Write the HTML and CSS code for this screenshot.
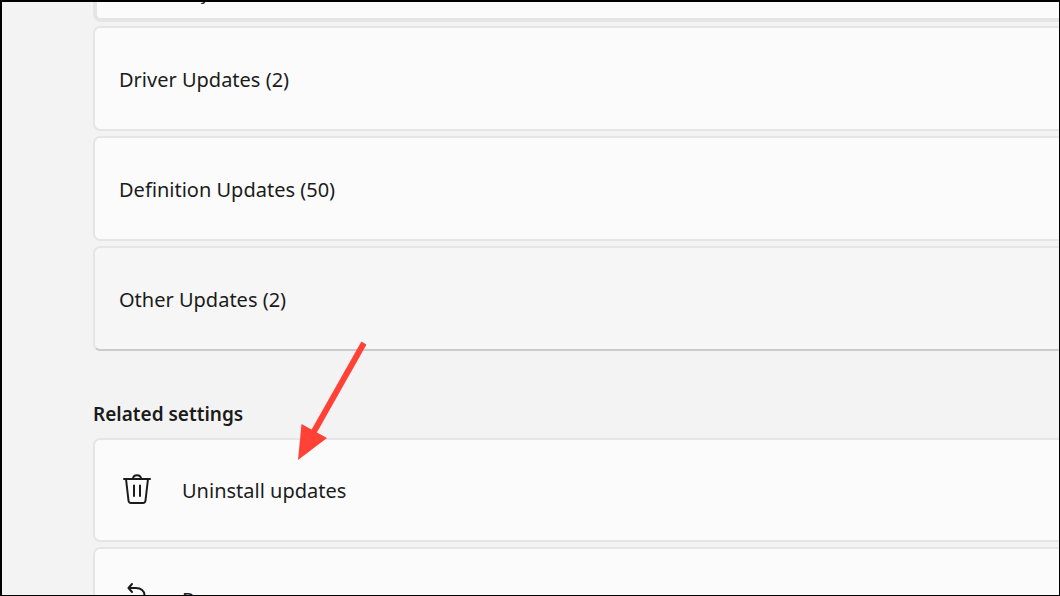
FILE: index.html
```
<!DOCTYPE html>
<html lang="en">
<head>
    <meta charset="UTF-8">
    <meta name="viewport" content="width=device-width, initial-scale=1.0">
    <title>Update history</title>
    <link rel="stylesheet" href="styles.css">
</head>
<body>
    <main class="page">
        <div class="expanded">
            <span class="caption">Successfully installed on</span>
        </div>

        <div class="list">
            <button class="row">Driver Updates (2)</button>
            <button class="row">Definition Updates (50)</button>
            <button class="row active">Other Updates (2)</button>
        </div>

        <h2>Related settings</h2>
        <div class="list related">
            <a class="row" href="#uninstall">
                <svg class="icon" viewBox="0 2 32 32" aria-hidden="true">
                    <path d="M3 6H29M5 6L7.500 27.500Q7.800 30 10 30H22Q24.200 30 24.500 27.500L27 6M12 6C12 1 20 1 20 6M13 12.500V23M19 12.500V23"/>
                </svg>
                Uninstall updates
            </a>
            <a class="row" href="#recovery">
                <svg class="icon" viewBox="0 0 32 32" aria-hidden="true">
                    <path d="M11 0L7.500 4L11 8M7.500 4H15C20 4 23.500 7 23.500 11V15M5 14V28H27V18M19 23H23"/>
                </svg>
                Recovery
            </a>
        </div>

        <!-- pointer to "Uninstall updates" -->
        <svg class="arrow" viewBox="0 0 70 120" aria-hidden="true">
            <path class="shaft" d="M68 3L16 95"/>
            <path class="head" d="M2 120L5.500 84L31 98Z"/>
        </svg>
    </main>
</body>
</html>
```
FILE: styles.css
```
* {
    box-sizing: border-box;
}
body {
    margin: 0;
    font-family: "Noto Sans", "Open Sans", sans-serif;
    font-size: 20px;
    line-height: 28px;
    color: #1b1b1b;
    background: #f3f3f3;
}
.page {
    position: relative;
    height: 100vh;
    padding-left: 91px;
    overflow: hidden;
    border: 2px solid #000;
    border-right-width: 1px;
    border-bottom-width: 1px;
}
.expanded {
    display: flex;
    align-items: flex-end;
    height: 20px;
    margin-bottom: 4px;
    padding: 0 22px 12px;
    overflow: hidden;
    background: #fbfbfb;
    border: 4px solid #e5e5e5;
    border-width: 0 0 4px 4px;
    border-radius: 0 0 0 8px;
}
.caption {
    font-size: 16px;
    line-height: 24px;
}
.list {
    display: flex;
    flex-direction: column;
    gap: 5px;
}
.row {
    display: flex;
    align-items: center;
    height: 105px;
    padding: 2px 24px 0;
    font: inherit;
    color: inherit;
    text-align: left;
    text-decoration: none;
    background: #fbfbfb;
    border: 2px solid #e5e5e5;
    border-right: none;
    border-radius: 7px 0 0 7px;
    cursor: pointer;
}
.row:hover,
.row.active {
    background: #f6f6f6;
}
.row.active {
    border-bottom-color: #cbcbcb;
}
.related .row {
    gap: 29px;
    height: 104px;
    padding-left: 26px;
}
h2 {
    margin: 49px 0 10px;
    font-size: 19px;
    font-weight: 600;
    line-height: 28px;
}
.icon {
    width: 32px;
    height: 32px;
    overflow: visible;
    fill: none;
    stroke: #1b1b1b;
    stroke-width: 2;
    stroke-linecap: round;
    stroke-linejoin: round;
}
.arrow {
    position: absolute;
    left: 294px;
    top: 338px;
    width: 70px;
    height: 120px;
}
.shaft {
    fill: none;
    stroke: #ff4136;
    stroke-width: 6;
}
.head {
    fill: #ff4136;
}
```
